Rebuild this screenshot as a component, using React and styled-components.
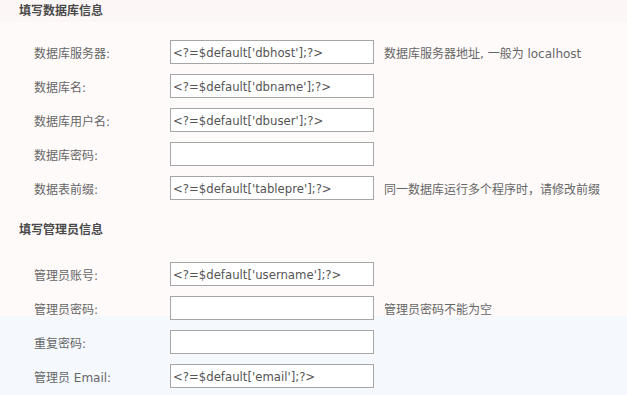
import React from 'react'
import styled, { createGlobalStyle } from 'styled-components';

const GlobalStyle = createGlobalStyle`
    html, body {
        margin: 0;
        padding: 0;
    }
    body {
        width: 627px;
        height: 395px;
        overflow: hidden;
        background: linear-gradient(
            to bottom,
            #fdf6f6 0px, #fdf6f6 22px,
            #fefafa 22px, #fefafa 316px,
            #f5f9fe 316px, #f5f9fe 100%
        );
        font-family: "DejaVu Sans", "Noto Sans CJK SC", sans-serif;
    }
`

const dbFields = [
    { label: '数据库服务器:', value: "<?=$default['dbhost'];?>", hint: '数据库服务器地址, 一般为 localhost' },
    { label: '数据库名:', value: "<?=$default['dbname'];?>" },
    { label: '数据库用户名:', value: "<?=$default['dbuser'];?>" },
    { label: '数据库密码:', value: '' },
    { label: '数据表前缀:', value: "<?=$default['tablepre'];?>", hint: '同一数据库运行多个程序时，请修改前缀' },
]

const adminFields = [
    { label: '管理员账号:', value: "<?=$default['username'];?>" },
    { label: '管理员密码:', value: '', hint: '管理员密码不能为空' },
    { label: '重复密码:', value: '' },
    { label: '管理员 Email:', value: "<?=$default['email'];?>" },
]

const Field = ({ item }) => (
    <Row>
        <Label>{item.label}</Label>
        <Input type="text" defaultValue={item.value} />
        {item.hint && <Hint>{item.hint}</Hint>}
    </Row>
)

const App = () => {
    return (
        <Page>
            <GlobalStyle />
            <Title $top={0} $bottom={15}>填写数据库信息</Title>
            <Rows>
                {dbFields.map((f) => <Field key={f.label} item={f} />)}
            </Rows>
            <Title $top={14} $bottom={18}>填写管理员信息</Title>
            <Rows>
                {adminFields.map((f) => <Field key={f.label} item={f} />)}
            </Rows>
        </Page>
    )
}

export default App;

const Page = styled.div`
    display: flex;
    flex-direction: column;
`

const Title = styled.h3`
    margin: ${(p) => p.$top}px 0 ${(p) => p.$bottom}px;
    padding-left: 19px;
    height: 20px;
    line-height: 20px;
    font-size: 12px;
    font-weight: bold;
    color: #4a4a4a;
    font-family: "Noto Sans CJK SC", sans-serif;
`

const Rows = styled.div`
    display: flex;
    flex-direction: column;
`

const Row = styled.div`
    display: flex;
    align-items: center;
    height: 34px;
`

const Label = styled.span`
    width: 136px;
    padding-left: 34px;
    font-size: 12px;
    color: #666;
    font-family: "DejaVu Sans", "Noto Sans CJK SC", sans-serif;
`

const Input = styled.input`
    box-sizing: border-box;
    width: 204px;
    height: 24px;
    margin: 0;
    padding: 0 2px;
    border: 1px solid #a6a6a6;
    background: #fff;
    font-size: 13px;
    color: #555;
    font-family: "DejaVu Sans Condensed", "DejaVu Sans", sans-serif;
    font-stretch: condensed;
    outline: none;
`

const Hint = styled.span`
    margin-left: 10px;
    font-size: 12px;
    color: #666;
    font-family: "DejaVu Sans", "Noto Sans CJK SC", sans-serif;
`
